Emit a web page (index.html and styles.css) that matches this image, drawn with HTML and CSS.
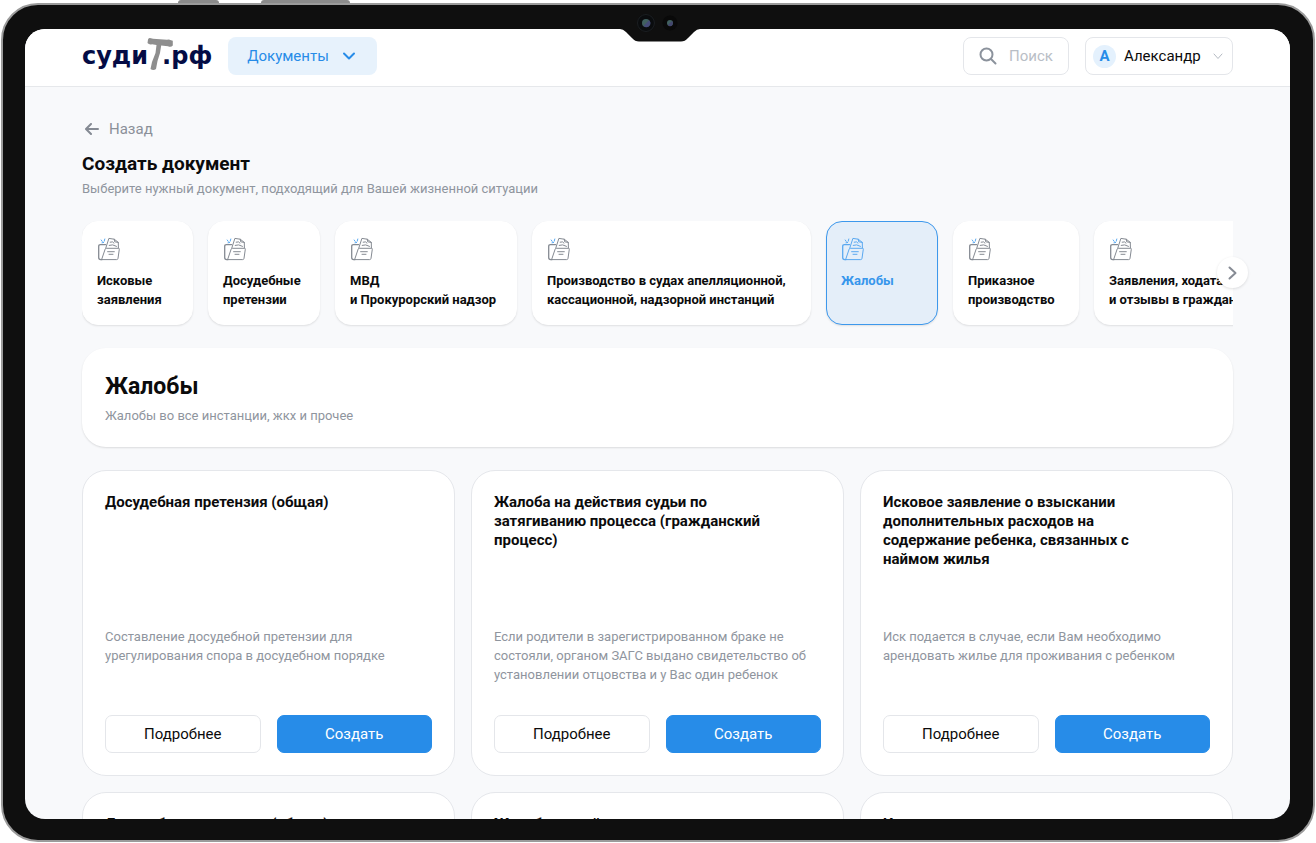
FILE: index.html
```html
<!DOCTYPE html>
<html lang="ru">

<head>
    <meta charset="UTF-8">
    <meta name="viewport" content="width=device-width, initial-scale=1.0">
    <title>Создать документ</title>
    <link rel="stylesheet" href="styles.css">
</head>

<body>

    <!-- shared icons -->
    <svg class="sprite" aria-hidden="true">
        <symbol id="folder" viewBox="0 0 24 24">
            <path class="spark" d="M4.2 3l1 1.400M7.800 2l-.6 2.200M5 5.800l1.600-.3" />
            <path d="M8.600 7.600H3.400Q1.700 7.600 1.700 9.400V20.600Q1.700 22.600 3.600 22.600H5" stroke-width="1.300" />
            <path d="M8.800 11L11.900 1.400L17.200 2.200L21.300 5.400L21.400 11" />
            <path d="M17.200 2.200L17.700 4.800L21.300 5.400M13.200 5.200L15.600 4.900L17 6.200M12.200 8.300Q15.500 6.800 19.500 9.300" />
            <path d="M4.800 22L8.200 12Q8.500 11.300 9.200 11.300H21.600Q22.500 11.300 22.300 12.300L21 21.400Q20.800 22.600 19.600 22.600H4.500" />
            <path d="M10.600 14.700H17.300M12 17.300H16" />
        </symbol>
    </svg>

    <div class="device">
        <div class="keys"><span></span><span></span></div>
        <svg class="notch" viewBox="0 0 80 28" aria-hidden="true">
            <path d="M0 15Q3 15 6 18L12 24Q15 27.500 19 27.500H61Q65 27.500 68 24L74 18Q77 15 80 15V0H0Z" fill="#0f0f0f" />
            <circle cx="26" cy="9" r="9" fill="#0a0c0e" />
            <circle cx="26" cy="9" r="8.500" fill="none" stroke="#1b1e21" />
            <circle cx="26" cy="9" r="4" fill="#41605f" />
            <path d="M23.500 12L29 6.200A4 4 0 0 1 25 13Z" fill="#454b78" />
            <circle cx="50" cy="9" r="7.500" fill="#090909" />
            <circle cx="50" cy="9" r="3" fill="#416060" />
            <path d="M48 11L52 7A3 3 0 0 1 49 12Z" fill="#44466f" />
        </svg>

        <div class="screen">
            <header class="header">
                <a class="logo" href="#" aria-label="судит.рф">
                    <span>суди</span>
                    <svg class="hammer" viewBox="0 0 26 34" aria-hidden="true">
                        <path d="M1 2.500Q2 .5 4 1.300L6 1.800L20 2.800Q22 2 24 3.200L25.800 3.800V8.500Q24 10.500 21 9.200L14.200 8.500L13 16L10.500 24L9 32Q6.500 34 3.500 32L5 25L8.500 16L9.500 8L5 7.300Q2 8 .5 6Z" fill="#8e8e8e" />
                    </svg>
                    <span>.рф</span>
                </a>
                <button class="docs" type="button">
                    Документы
                    <svg width="14" height="8" viewBox="0 0 14 8"><path d="M2 1.500L7 6.500L12 1.500" /></svg>
                </button>
                <label class="search">
                    <svg width="18" height="18" viewBox="0 0 18 18"><circle cx="7.500" cy="7.500" r="6" /><path d="M12 12L16.500 16.500" /></svg>
                    <input type="text" placeholder="Поиск" aria-label="Поиск">
                </label>
                <button class="user" type="button">
                    <span class="avatar">А</span>
                    Александр
                    <svg width="10" height="7" viewBox="0 0 10 7"><path d="M1 1L5 5.500L9 1" /></svg>
                </button>
            </header>

            <main class="main">
                <a class="back" href="#">
                    <svg width="14" height="12" viewBox="0 0 14 12"><path d="M13 6H1.500M6 1L1 6L6 11" /></svg>
                    Назад
                </a>
                <h1>Создать документ</h1>
                <p class="lead">Выберите нужный документ, подходящий для Вашей жизненной ситуации</p>

                <div class="slider">
                    <div class="tabs">
                        <button class="tab" type="button"><svg><use href="#folder" /></svg><span>Исковые<br>заявления</span></button>
                        <button class="tab" type="button"><svg><use href="#folder" /></svg><span>Досудебные<br>претензии</span></button>
                        <button class="tab" type="button"><svg><use href="#folder" /></svg><span>МВД<br>и Прокурорский надзор</span></button>
                        <button class="tab" type="button"><svg><use href="#folder" /></svg><span>Производство в судах апелляционной,<br>кассационной, надзорной инстанций</span></button>
                        <button class="tab active" type="button"><svg><use href="#folder" /></svg><span>Жалобы</span></button>
                        <button class="tab" type="button"><svg><use href="#folder" /></svg><span>Приказное<br>производство</span></button>
                        <button class="tab" type="button"><svg><use href="#folder" /></svg><span>Заявления, ходатайства<br>и отзывы в гражданском</span></button>
                    </div>
                    <button class="next" type="button" aria-label="Вперед">
                        <svg width="9" height="14" viewBox="0 0 9 14"><path d="M1.500 1.500L7.500 7L1.500 12.500" /></svg>
                    </button>
                </div>

                <section class="panel">
                    <h2>Жалобы</h2>
                    <p>Жалобы во все инстанции, жкх и прочее</p>
                </section>

                <div class="cards">
                    <article class="card">
                        <h3>Досудебная претензия (общая)</h3>
                        <p>Составление досудебной претензии для урегулирования спора в досудебном порядке</p>
                        <div class="actions">
                            <button class="btn" type="button">Подробнее</button>
                            <button class="btn primary" type="button">Создать</button>
                        </div>
                    </article>
                    <article class="card">
                        <h3>Жалоба на действия судьи по затягиванию процесса (гражданский процесс)</h3>
                        <p>Если родители в зарегистрированном браке не состояли, органом ЗАГС выдано свидетельство об установлении отцовства и у Вас один ребенок</p>
                        <div class="actions">
                            <button class="btn" type="button">Подробнее</button>
                            <button class="btn primary" type="button">Создать</button>
                        </div>
                    </article>
                    <article class="card">
                        <h3>Исковое заявление о взыскании дополнительных расходов на содержание ребенка, связанных с наймом жилья</h3>
                        <p>Иск подается в случае, если Вам необходимо арендовать жилье для проживания с ребенком</p>
                        <div class="actions">
                            <button class="btn" type="button">Подробнее</button>
                            <button class="btn primary" type="button">Создать</button>
                        </div>
                    </article>
                    <article class="card">
                        <h3>Досудебная претензия (общая)</h3>
                    </article>
                    <article class="card">
                        <h3>Жалоба на действия судьи</h3>
                    </article>
                    <article class="card">
                        <h3>Исковое заявление</h3>
                    </article>
                </div>
            </main>
        </div>
    </div>

</body>

</html>
```
FILE: styles.css
```css
* {
    box-sizing: border-box;
    margin: 0;
    padding: 0;
}

body {
    height: 100vh;
    padding: 3px 1px 1px;
    font-family: Roboto, "Liberation Sans", sans-serif;
    color: #0b0b0c;
    background: #fff;
    overflow: hidden;
}

button,
input {
    font: inherit;
    color: inherit;
}

button {
    cursor: pointer;
}

a {
    text-decoration: none;
}

svg {
    fill: none;
    stroke-linecap: round;
    stroke-linejoin: round;
    flex-shrink: 0;
}

.sprite {
    position: absolute;
    width: 0;
    height: 0;
}

/* tablet frame */
.device {
    position: relative;
    height: 100%;
    padding: 24px 23px 21px 22px;
    border: 2px solid #9b9b9b;
    border-radius: 37px;
    background: #0f0f0f;
}

.keys {
    position: absolute;
    top: -5px;
    left: 175px;
    display: flex;
    gap: 42px;
}

.keys span {
    width: 41px;
    height: 3px;
    border-radius: 3px 3px 0 0;
    background: #8b8b8b;
}

.keys span:last-child {
    width: 89px;
}

.notch {
    position: absolute;
    top: 9px;
    left: 50%;
    width: 80px;
    height: 28px;
    margin-left: -38px;
}

.screen {
    height: 100%;
    border-radius: 20px;
    background: #f8f9fb;
    overflow: hidden;
}

/* header */
.header {
    display: flex;
    align-items: center;
    gap: 16px;
    padding: 8px 57px 11px;
    border-bottom: 1px solid #e6e8eb;
    background: #fff;
}

.logo {
    display: flex;
    align-items: center;
    height: 38px;
    font: bold 24px/32px "DejaVu Sans", sans-serif;
    color: #040c45;
}

.hammer {
    width: 26px;
    height: 34px;
    margin: 0 -11px 4px -1px;
}

.docs {
    display: flex;
    align-items: center;
    gap: 13px;
    height: 38px;
    padding: 0 21px 0 19px;
    border: 0;
    border-radius: 8px;
    font-size: 15px;
    color: #278ce8;
    background: #e7f2fc;
}

.docs svg {
    stroke: #278ce8;
    stroke-width: 2;
}

.search {
    display: flex;
    align-items: center;
    gap: 12px;
    width: 106px;
    height: 38px;
    margin-left: auto;
    padding: 0 8px 0 15px;
    border: 1px solid #e4e6ea;
    border-radius: 8px;
}

.search svg {
    stroke: #8b929c;
    stroke-width: 2;
}

.search input {
    width: 100%;
    min-width: 0;
    border: 0;
    outline: 0;
    font-size: 15px;
    background: none;
}

.search input::placeholder {
    color: #b9bec6;
}

.user {
    display: flex;
    align-items: center;
    gap: 8px;
    width: 148px;
    height: 38px;
    padding: 0 9px 0 7px;
    border: 1px solid #e4e6ea;
    border-radius: 8px;
    font-size: 15px;
    background: #fff;
}

.user svg {
    margin-left: auto;
    stroke: #b4bac2;
}

.avatar {
    width: 23px;
    border-radius: 50%;
    font-weight: 700;
    line-height: 23px;
    text-align: center;
    color: #278ce8;
    background: #e4f1fd;
}

/* content */
.main {
    padding: 32px 57px 0;
}

.back {
    display: flex;
    align-items: center;
    gap: 10px;
    padding-left: 3px;
    font-size: 15px;
    line-height: 20px;
    color: #8b9099;
}

.back svg {
    stroke: #858a93;
    stroke-width: 2;
}

h1 {
    margin-top: 13px;
    font-size: 19px;
    line-height: 24px;
}

.lead {
    margin-top: 3px;
    font-size: 13px;
    line-height: 19px;
    color: #8f959e;
}

.slider {
    position: relative;
    margin-top: 23px;
}

.tabs {
    display: grid;
    grid-template-columns: 111px 112px 182px 279px 112px 126px max-content;
    gap: 15px;
    padding-bottom: 4px;
    overflow: hidden;
}

.tab {
    display: flex;
    flex-direction: column;
    gap: 10px;
    height: 104px;
    padding: 15px 14px 0;
    border: 1px solid #fff;
    border-radius: 16px;
    font-size: 13px;
    font-weight: 700;
    line-height: 19px;
    text-align: left;
    white-space: nowrap;
    background: #fff;
    box-shadow: 0 1px 2px rgba(0, 0, 0, .1);
}

.tab svg {
    width: 24px;
    height: 24px;
    stroke: #858a92;
}

.spark {
    stroke: #5aaaf2;
}

.tab.active {
    border-color: #3d98ec;
    color: #3796ec;
    background: #e4eef9;
}

.tab.active svg {
    stroke: #5aa8f0;
}

.next {
    position: absolute;
    top: 36px;
    right: -15px;
    display: flex;
    align-items: center;
    justify-content: center;
    width: 31px;
    height: 31px;
    border: 0;
    border-radius: 50%;
    background: #fff;
    box-shadow: 0 1px 3px rgba(0, 0, 0, .12);
}

.next svg {
    stroke: #868b94;
    stroke-width: 2;
}

.panel {
    margin-top: 19px;
    padding: 24px 23px 22px;
    border-radius: 24px;
    background: #fff;
    box-shadow: 0 1px 2px rgba(0, 0, 0, .12);
}

.panel h2 {
    font-size: 23px;
    line-height: 30px;
}

.panel p {
    margin-top: 4px;
    font-size: 13px;
    line-height: 19px;
    color: #8f959e;
}

.cards {
    display: grid;
    grid-template-columns: repeat(3, 1fr);
    gap: 16px;
    margin-top: 23px;
}

.card {
    display: flex;
    flex-direction: column;
    height: 306px;
    padding: 22px;
    border: 1px solid #e5e7eb;
    border-radius: 24px;
    background: #fff;
}

.card h3 {
    height: 134px;
    padding-right: 40px;
    font-size: 15px;
    line-height: 19px;
}

.card p {
    font-size: 13px;
    line-height: 19px;
    color: #8f959e;
}

.actions {
    display: flex;
    gap: 16px;
    margin-top: auto;
}

.btn {
    flex: 1;
    height: 38px;
    border: 1px solid #e4e6ea;
    border-radius: 7px;
    font-size: 15px;
    background: #fff;
}

.btn.primary {
    border-color: #278ce8;
    color: #fff;
    background: #278ce8;
}
```
